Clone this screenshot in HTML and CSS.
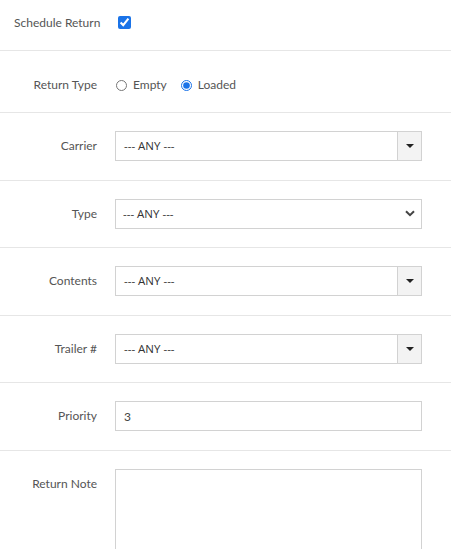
FILE: index.html
```html
<!DOCTYPE html>
<html lang="en">
<head>
  <meta charset="UTF-8" />
  <title>Schedule Return</title>
  <link rel="stylesheet" href="styles.css">
</head>
<body>
  <form class="return-form">
    <div class="form-row first">
      <label class="row-label left">Schedule Return</label>
      <div class="row-field check">
        <input type="checkbox" checked>
      </div>
    </div>

    <div class="form-row">
      <label class="row-label">Return Type</label>
      <div class="row-field radios">
        <label class="radio"><input type="radio" name="rtype"> Empty</label>
        <label class="radio"><input type="radio" name="rtype" checked> Loaded</label>
      </div>
    </div>

    <div class="form-row boxed">
      <label class="row-label">Carrier</label>
      <div class="row-field">
        <div class="combo">
          <span class="combo-text">--- ANY ---</span>
          <span class="combo-addon"><span class="caret"></span></span>
        </div>
      </div>
    </div>

    <div class="form-row boxed">
      <label class="row-label">Type</label>
      <div class="row-field">
        <div class="select-wrap">
          <select class="plain-select">
            <option>--- ANY ---</option>
          </select>
          <svg class="chevron" width="10" height="7" viewBox="0 0 10 7"><path d="M1 1.2 L5 5.2 L9 1.2" fill="none" stroke="#444" stroke-width="2"/></svg>
        </div>
      </div>
    </div>

    <div class="form-row boxed">
      <label class="row-label">Contents</label>
      <div class="row-field">
        <div class="combo">
          <span class="combo-text">--- ANY ---</span>
          <span class="combo-addon"><span class="caret"></span></span>
        </div>
      </div>
    </div>

    <div class="form-row boxed">
      <label class="row-label">Trailer #</label>
      <div class="row-field">
        <div class="combo">
          <span class="combo-text">--- ANY ---</span>
          <span class="combo-addon"><span class="caret"></span></span>
        </div>
      </div>
    </div>

    <div class="form-row boxed">
      <label class="row-label">Priority</label>
      <div class="row-field">
        <input class="text-input" type="text" value="3">
      </div>
    </div>

    <div class="form-row boxed last">
      <label class="row-label">Return Note</label>
      <div class="row-field">
        <textarea class="note"></textarea>
      </div>
    </div>
  </form>
</body>
</html>
```

FILE: styles.css
```css
html, body { margin: 0; padding: 0; background: #fff; }
body { font-family: Lato, "Liberation Sans", sans-serif; font-size: 12px; color: #555; overflow: hidden; }

.return-form { width: 451px; }
.form-row {
  display: grid;
  grid-template-columns: 97px 1fr;
  column-gap: 18px;
  padding: 19px 29px 19px 0;
  border-bottom: 1px solid #e6e6e6;
}
.form-row.first { padding-top: 8px; }
.form-row.boxed { padding-top: 18px; padding-bottom: 18.5px; }
.form-row.last { border-bottom: none; }

.row-label { text-align: right; padding-top: 7px; line-height: 16px; white-space: nowrap; }
.row-label.left { text-align: left; padding-left: 14px; }

.row-field.check { padding-top: 8px; }
.row-field.check input { margin: 0 0 0 3px; width: 13px; height: 13px; accent-color: #1a73e8; display: block; }

.radios { display: flex; align-items: center; gap: 13px; padding-top: 7px; line-height: 16px; }
.radio { display: flex; align-items: center; gap: 6px; color: #555; }
.radio input { margin: 0 0 0 1px; width: 11px; height: 11px; accent-color: #1a73e8; }

/* select2-ish combo with grey addon */
.combo {
  display: flex;
  height: 30px;
  box-sizing: border-box;
  border: 1px solid #d2d2d2;
}
.combo-text { flex: 1; padding-left: 8px; line-height: 28px; font-family: "Open Sans", sans-serif; font-size: 11.5px; color: #333; }
.combo-addon {
  width: 23px;
  background: #f3f3f3;
  border-left: 1px solid #d2d2d2;
  display: flex;
  align-items: center;
  justify-content: center;
}
.caret { width: 0; height: 0; border-left: 4px solid transparent; border-right: 4px solid transparent; border-top: 4px solid #222; }

.select-wrap { position: relative; }
.plain-select {
  width: 100%;
  height: 30px;
  box-sizing: border-box;
  border: 1px solid #d2d2d2;
  border-radius: 0;
  background: #fff;
  appearance: none;
  padding: 0 0 0 7px;
  font-family: "Open Sans", sans-serif;
  font-size: 11.5px;
  color: #333;
  outline: none;
}
.chevron { position: absolute; right: 7px; top: 11px; pointer-events: none; }

.text-input {
  width: 100%;
  height: 30px;
  box-sizing: border-box;
  border: 1px solid #d2d2d2;
  padding: 0 8px;
  font-family: Lato, sans-serif;
  font-size: 12px;
  color: #444;
  outline: none;
}
.note {
  display: block;
  width: 100%;
  height: 110px;
  box-sizing: border-box;
  border: 1px solid #d2d2d2;
  resize: none;
  outline: none;
}
```
